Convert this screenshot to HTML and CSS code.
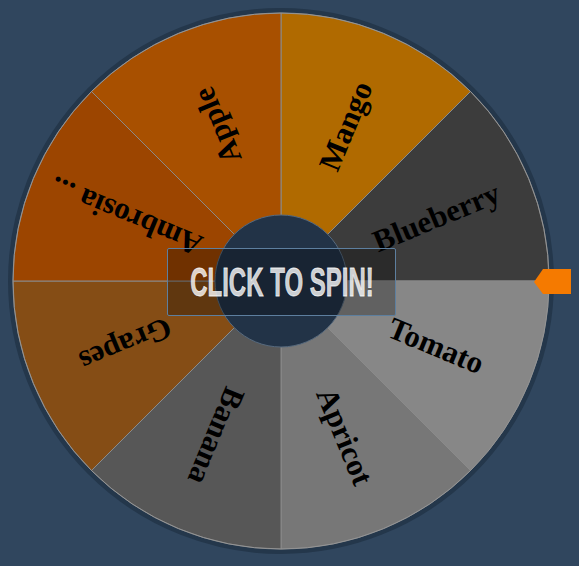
FILE: index.html
```html
<!DOCTYPE html>
<html>
<head>
<meta charset="utf-8">
<link rel="stylesheet" href="styles.css">
</head>
<body>
<div class="stage">
  <svg class="wheel" width="546" height="546" viewBox="0 0 546 546">
    <circle class="rim" cx="273" cy="273" r="270.5"/>
    <g class="segs">
      <path class="s-mango" d="M273 273 L273 5 A268 268 0 0 1 462.5 83.5 Z"/>
      <path class="s-blue" d="M273 273 L462.5 83.5 A268 268 0 0 1 541 273 Z"/>
      <path class="s-tomato" d="M273 273 L541 273 A268 268 0 0 1 462.5 462.5 Z"/>
      <path class="s-apricot" d="M273 273 L462.5 462.5 A268 268 0 0 1 273 541 Z"/>
      <path class="s-banana" d="M273 273 L273 541 A268 268 0 0 1 83.5 462.5 Z"/>
      <path class="s-grapes" d="M273 273 L83.5 462.5 A268 268 0 0 1 5 273 Z"/>
      <path class="s-ambrosia" d="M273 273 L5 273 A268 268 0 0 1 83.5 83.5 Z"/>
      <path class="s-apple" d="M273 273 L83.5 83.5 A268 268 0 0 1 273 5 Z"/>
    </g>
    <circle class="edge" cx="273" cy="273" r="268"/>
    <g class="labels">
      <text x="441" y="273" dy="0.35em" transform="rotate(-67.5 273 273)">Mango</text>
      <text x="441" y="273" dy="0.35em" transform="rotate(-22.5 273 273)">Blueberry</text>
      <text x="441" y="273" dy="0.35em" transform="rotate(22.5 273 273)">Tomato</text>
      <text x="441" y="273" dy="0.35em" transform="rotate(67.5 273 273)">Apricot</text>
      <text x="441" y="273" dy="0.35em" transform="rotate(112.5 273 273)">Banana</text>
      <text x="441" y="273" dy="0.35em" transform="rotate(157.5 273 273)">Grapes</text>
      <text x="441" y="273" dy="0.35em" transform="rotate(202.5 273 273)">Ambrosia ...</text>
      <text x="441" y="273" dy="0.35em" transform="rotate(247.5 273 273)">Apple</text>
    </g>
    <circle class="hub" cx="273" cy="273" r="66"/>
  </svg>
  <button class="spin"><span class="spin-label">CLICK TO SPIN!</span></button>
  <svg class="pointer" width="41" height="25" viewBox="0 0 41 25">
    <polygon points="0,13 9,0 41,0 41,25 9,25"/>
  </svg>
</div>
</body>
</html>
```

FILE: styles.css
```css
html, body {
  background: #30465e;
}
body {
  margin: 8px;
}
.stage {
  position: relative;
  width: 546px;
  height: 546px;
}
.wheel {
  display: block;
}
.rim {
  fill: none;
  stroke: #24374b;
  stroke-width: 5;
}
.segs path {
  stroke: #8a8a8a;
  stroke-width: 1;
}
.s-mango { fill: #b06a00; }
.s-blue { fill: #3c3c3c; }
.s-tomato { fill: #878787; }
.s-apricot { fill: #777777; }
.s-banana { fill: #575757; }
.s-grapes { fill: #854d15; }
.s-ambrosia { fill: #9c4500; }
.s-apple { fill: #a85000; }
.edge {
  fill: none;
  stroke: #9a9a9a;
  stroke-width: 1;
  opacity: 0.7;
}
.labels text {
  font-family: "Liberation Serif", serif;
  font-weight: bold;
  font-size: 31px;
  fill: #000;
  text-anchor: middle;
}
.hub {
  fill: #223347;
  stroke: #56697d;
  stroke-width: 1;
}
.spin {
  position: absolute;
  left: 159px;
  top: 240px;
  width: 229px;
  height: 68px;
  margin: 0;
  padding: 0;
  background: rgba(0, 0, 0, 0.28);
  border: 1px solid #5d7f9f;
  border-radius: 2px;
  display: flex;
  align-items: center;
  justify-content: center;
  overflow: hidden;
}
.spin-label {
  display: block;
  font-family: "Liberation Sans", sans-serif;
  font-weight: bold;
  font-size: 40px;
  line-height: 40px;
  color: rgba(255, 255, 255, 0.8);
  white-space: nowrap;
  transform: scaleX(0.6);
  -webkit-text-stroke: 0.8px rgba(255, 255, 255, 0.8);
}
.pointer {
  position: absolute;
  left: 526px;
  top: 261px;
}
.pointer polygon {
  fill: #f57a00;
}
```
